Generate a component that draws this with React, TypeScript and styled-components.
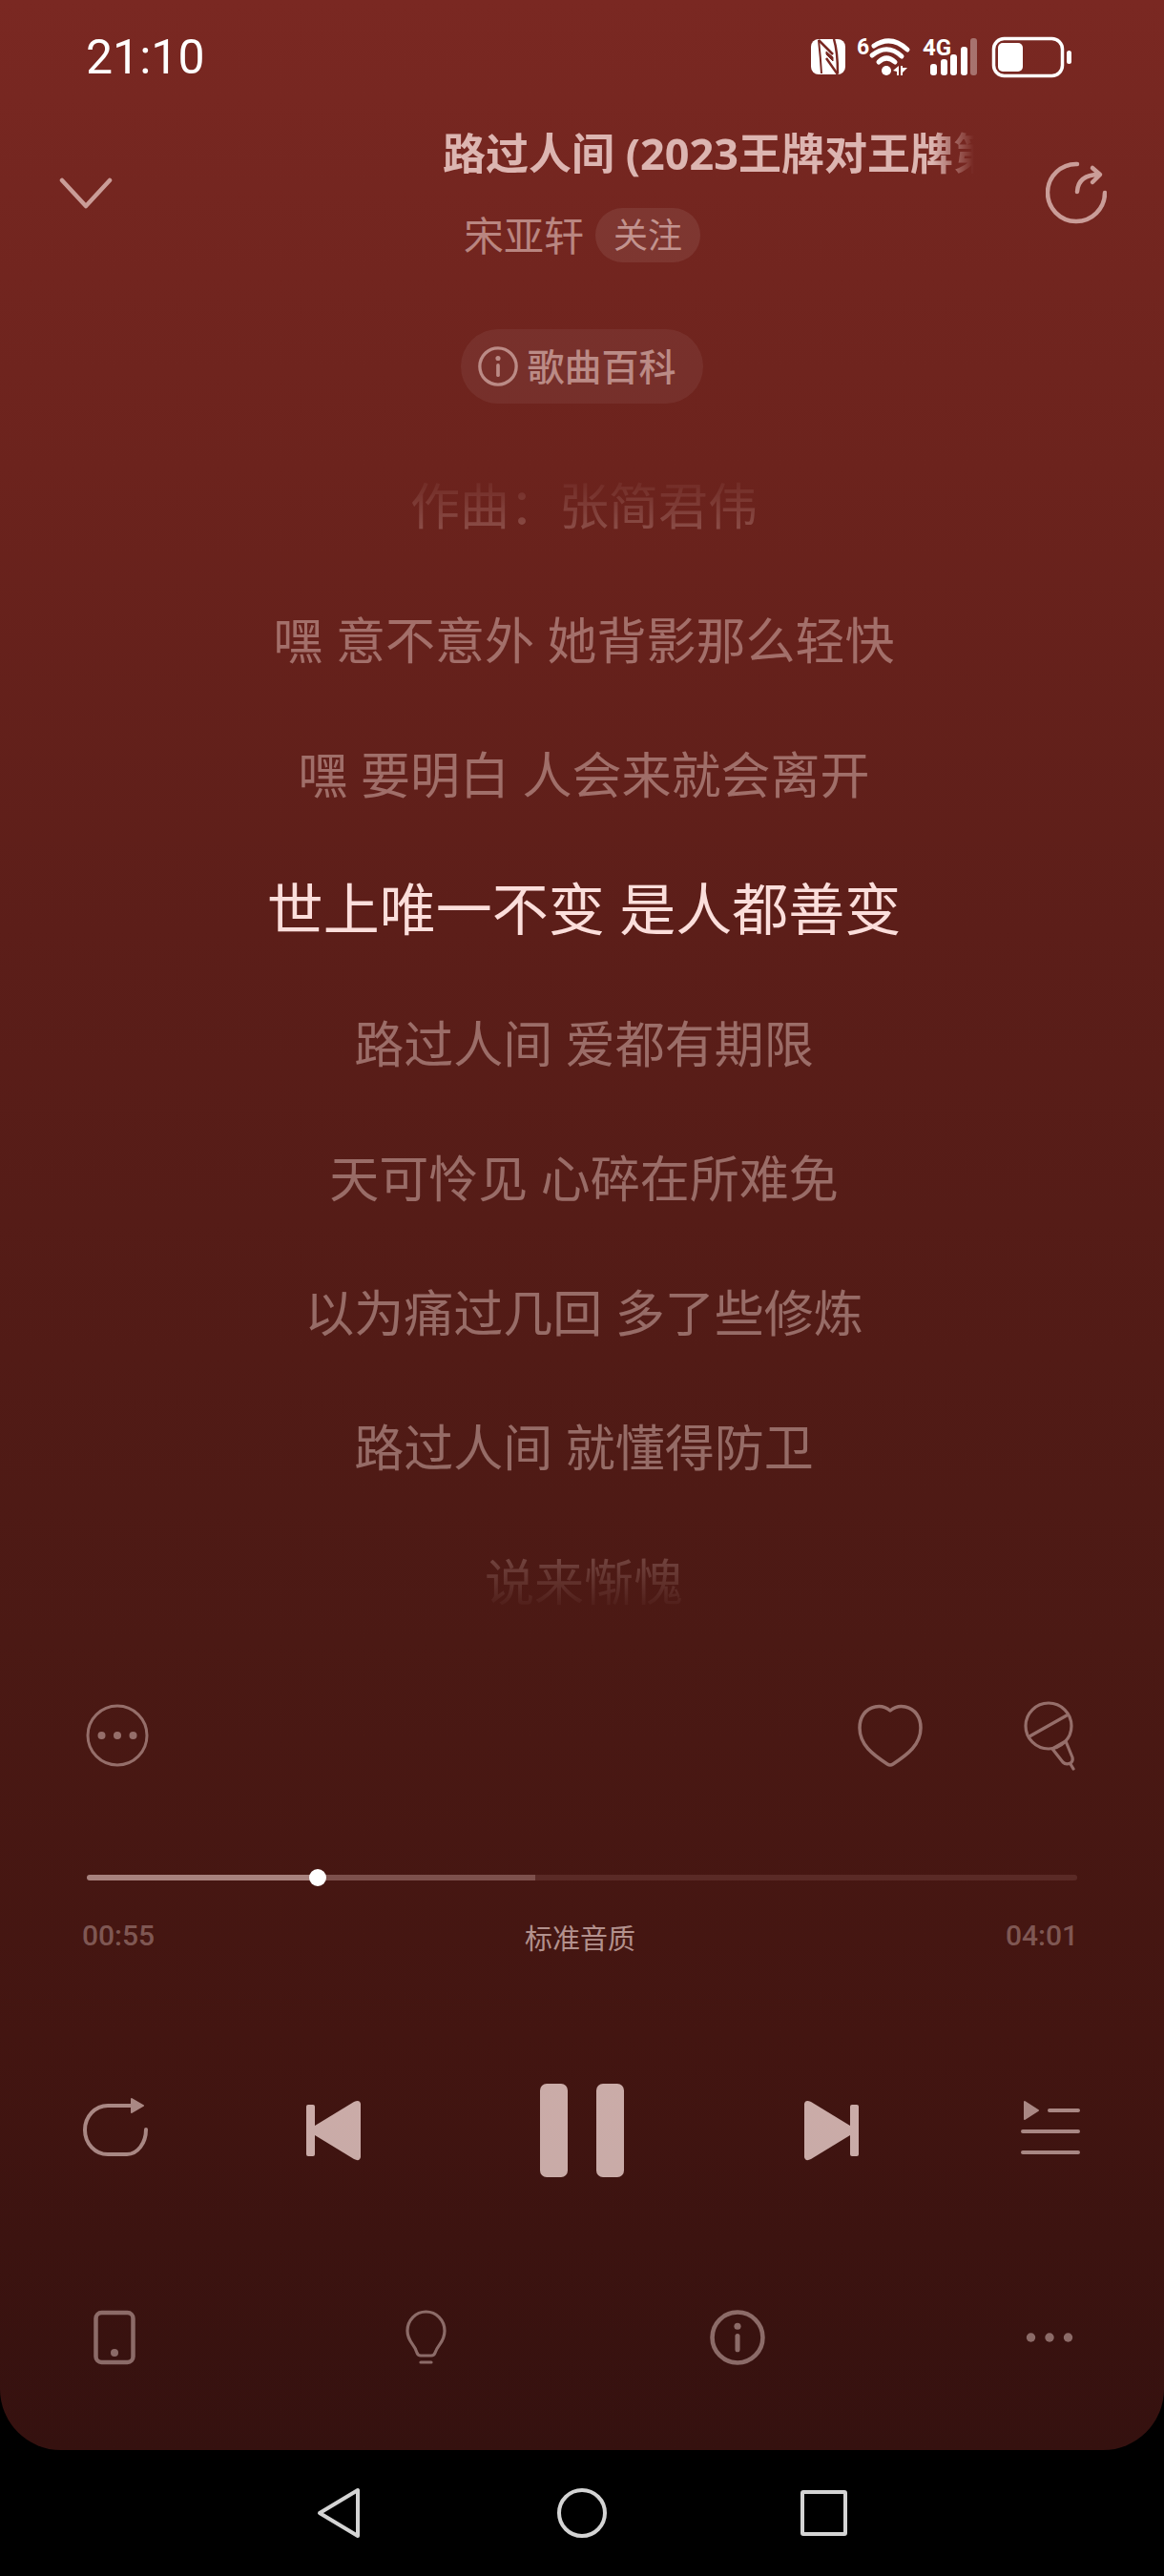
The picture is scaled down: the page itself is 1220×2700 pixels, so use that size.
import React, { useState } from 'react';
import styled, { createGlobalStyle, css } from 'styled-components';

const GlobalStyle = createGlobalStyle`
  * { box-sizing: border-box; }
  html, body { margin: 0; background: #000; }
  body { font-family: "Noto Sans", "Noto Sans CJK SC", sans-serif; color: #fff; }
  button { font: inherit; color: inherit; background: none; border: 0; padding: 0; cursor: pointer; }
  svg { display: block; flex: none; }
`;

const Phone = styled.div`
  display: flex;
  flex-direction: column;
  min-height: 100vh;
`;

const Player = styled.main`
  flex: 1;
  display: flex;
  flex-direction: column;
  border-radius: 0 0 64px 64px;
  color: #ffe6e2;
  background: linear-gradient(180deg, #7a2822 0%, #6c231d 19%, #5c1e19 38%, #4b1914 67%, #431511 83%, #35110f 100%);
`;

const StatusBar = styled.header`
  display: flex;
  align-items: center;
  justify-content: space-between;
  height: 120px;
  padding: 0 96px 0 90px;
  color: #fff;
`;

const Clock = styled.time`
  font-family: Roboto, sans-serif;
  font-size: 50px;
  font-weight: 400;
  line-height: 60px;
`;

const StatusIcons = styled.div`
  display: flex;
  align-items: center;
`;

const TitleBar = styled.section`
  display: grid;
  grid-template-columns: 64px 1fr 64px;
  column-gap: 75px;
  padding: 8px 60px 0;
`;

const IconButton = styled.button<{ $w: number; $h: number; $opacity?: number }>`
  display: flex;
  align-items: center;
  justify-content: center;
  width: ${(p) => p.$w}px;
  height: ${(p) => p.$h}px;
  opacity: ${(p) => p.$opacity ?? 1};
`;

const TitleStack = styled.div`
  display: flex;
  flex-direction: column;
  align-items: center;
  min-width: 0;
`;

const Title = styled.h1`
  align-self: stretch;
  margin: 0;
  padding-left: 265px;
  overflow: hidden;
  white-space: nowrap;
  font-size: 45px;
  font-weight: 700;
  line-height: 66px;
  color: rgba(255, 230, 226, 0.75);
  mask-image: linear-gradient(90deg, #000 calc(100% - 44px), transparent 100%);
`;

const ArtistRow = styled.div`
  display: flex;
  align-items: center;
  gap: 12px;
  margin-top: 24px;
`;

const Artist = styled.span`
  font-size: 42px;
  line-height: 57px;
  color: rgba(255, 230, 226, 0.5);
`;

const FollowButton = styled.button`
  && {
    height: 57px;
    padding: 0 19px;
    border-radius: 29px;
    font-size: 36px;
    line-height: 57px;
    background: rgba(255, 255, 255, 0.08);
    color: rgba(255, 230, 226, 0.55);
  }
`;

const WikiButton = styled.button`
  && {
    display: flex;
    align-items: center;
    align-self: center;
    gap: 9px;
    height: 78px;
    margin-top: 67px;
    padding: 0 28px 0 18px;
    border-radius: 39px;
    font-size: 39px;
    font-weight: 500;
    line-height: 78px;
    background: rgba(255, 255, 255, 0.06);
    color: rgba(255, 230, 226, 0.5);
  }
`;

const Lyrics = styled.ol`
  list-style: none;
  margin: 36px 0 0;
  padding: 0 0 0 4px;
  text-align: center;
  mask-image: linear-gradient(180deg, transparent 32px, #000 150px, #000 1120px, transparent 1232px);
`;

const LyricLine = styled.li<{ $active?: boolean }>`
  font-size: 52px;
  line-height: 141px;
  color: rgba(255, 230, 226, 0.4);
  ${(p) =>
    p.$active &&
    css`
      font-size: 59px;
      color: #fbdedb;
    `}
`;

const Actions = styled.div`
  display: flex;
  align-items: center;
  gap: 106px;
  margin-top: 54px;
  padding: 0 91px 0 89px;
  opacity: 0.42;
`;

const Spacer = styled.span`
  flex: 1;
`;

const Seek = styled.input<{ $played: number; $buffered: number }>`
  appearance: none;
  display: block;
  width: auto;
  height: 18px;
  margin: 103px 91px 0;
  background: transparent;
  &::-webkit-slider-runnable-track {
    height: 6px;
    border-radius: 3px;
    background: linear-gradient(
      90deg,
      #a8827e 0 ${(p) => p.$played}%,
      #7d504c ${(p) => p.$played}% ${(p) => p.$buffered}%,
      #5a2a26 ${(p) => p.$buffered}% 100%
    );
  }
  &::-webkit-slider-thumb {
    appearance: none;
    width: 18px;
    height: 18px;
    margin-top: -6px;
    border-radius: 50%;
    background: #fff;
  }
`;

const TimeRow = styled.div`
  display: grid;
  grid-template-columns: 1fr auto 1fr;
  align-items: start;
  margin-top: 34px;
  padding: 0 90px 0 86px;
`;

const TimeLabel = styled.span<{ $end?: boolean }>`
  font-family: Roboto, sans-serif;
  font-size: 30px;
  font-weight: 500;
  line-height: 36px;
  color: rgba(255, 230, 226, 0.32);
  text-align: ${(p) => (p.$end ? 'right' : 'left')};
`;

const Quality = styled.button`
  && {
    font-size: 29px;
    line-height: 42px;
    color: rgba(255, 230, 226, 0.6);
  }
`;

const Transport = styled.div`
  display: flex;
  align-items: center;
  justify-content: space-between;
  margin-top: 130px;
  padding: 0 87px;
`;

const Tools = styled.nav`
  display: flex;
  justify-content: space-between;
  margin: 134px 0 85px;
  padding: 0 87px;
  opacity: 0.42;
`;

const SystemNav = styled.nav`
  display: flex;
  align-items: center;
  justify-content: center;
  gap: 194px;
  height: 132px;
  color: #d4d4d4;
`;

const stroke = { fill: 'none', stroke: 'currentColor', strokeLinecap: 'round', strokeLinejoin: 'round' } as const;

const StatusGlyphs = () => (
  <svg width="274" height="60" viewBox="0 -10 274 60" fill="#fff">
    <rect x="0" y="1" width="36" height="37" rx="8" />
    <g fill="none" stroke="#792822">
      <path d="M8 2 Q10 20 11 37" strokeWidth="2" />
      <path d="M8 2 L23 17" strokeWidth="2.500" />
      <path d="M16 14 L23 20 V24 L16 17 Z" fill="#792822" strokeWidth="1" />
      <path d="M16 21 L28 38" strokeWidth="2.500" />
      <path d="M24 1 Q28 14 28 37" strokeWidth="2.500" />
    </g>
    <text x="48" y="17" fontFamily="Roboto, sans-serif" fontWeight="700" fontSize="23">6</text>
    <g fill="none" stroke="#fff" strokeWidth="5" strokeLinecap="round">
      <path d="M66 8 Q84 -4 101 12" />
      <path d="M64 18 Q80 5 95 19" />
      <path d="M71 25 Q79 17 88 25" />
    </g>
    <circle cx="79" cy="34" r="5" />
    <path d="M86 34 L92 29 V39 H90 V35 Z M94 29 V39 H96 V36 L101 31 H96 V29 Z" />
    <text x="117" y="18" fontFamily="Roboto, sans-serif" fontWeight="700" fontSize="24">4G</text>
    <rect x="125" y="27" width="7" height="12" rx="3" />
    <rect x="136" y="22" width="7" height="17" rx="3" />
    <rect x="146" y="17" width="7" height="22" rx="3" />
    <rect x="157" y="9" width="7" height="30" rx="3" />
    <rect x="167" y="0" width="7" height="39" rx="3" opacity=".35" />
    <rect x="191.500" y="0.500" width="72" height="39" rx="11" fill="none" stroke="#fff" strokeWidth="3.500" />
    <rect x="196" y="5" width="26" height="30" rx="5" />
    <rect x="268" y="13" width="5" height="14" rx="2.500" />
  </svg>
);

const ChevronIcon = () => (
  <svg width="60" height="34" viewBox="0 0 60 34" {...stroke} strokeWidth="4.500">
    <path d="M3 3 L28 30 L53 3" />
  </svg>
);

const ShareIcon = () => (
  <svg width="64" height="68" viewBox="0 0 64 68" {...stroke} strokeWidth="4.500">
    <path d="M33 3 A30 30 0 1 0 62 33" />
    <path d="M33 32 Q34 14 56 14 M49 7 L57 14 L49 22" />
  </svg>
);

const InfoIcon = ({ size }: { size: number }) => (
  <svg width={size} height={size} viewBox="0 0 57 57" {...stroke} strokeWidth="4.500">
    <circle cx="28.500" cy="28.500" r="26" />
    <path d="M28.500 27 V41" strokeWidth="5" />
    <circle cx="28.500" cy="17" r="3.500" fill="currentColor" stroke="none" />
  </svg>
);

const CommentIcon = () => (
  <svg width="66" height="66" viewBox="0 0 66 66" {...stroke} strokeWidth="3">
    <circle cx="33" cy="33" r="31" />
    <g fill="currentColor" stroke="none">
      <circle cx="16.500" cy="33" r="4" />
      <circle cx="33" cy="33" r="4" />
      <circle cx="49.500" cy="33" r="4" />
    </g>
  </svg>
);

const HeartIcon = () => (
  <svg width="68" height="66" viewBox="0 0 68 66" {...stroke} strokeWidth="3.500">
    <path d="M34 7 C28 2 22 2 18 3 C8 5 2 14 2 25 C2 43 16 53 31 63 Q34 65 37 63 C52 53 66 43 66 25 C66 14 60 5 50 3 C46 2 40 2 34 7 Z" />
  </svg>
);

const MicIcon = () => (
  <svg width="56" height="74" viewBox="0 0 56 74" {...stroke} strokeWidth="3.200">
    <circle cx="26" cy="27" r="24" />
    <path d="M6 38 L45 16" />
    <path d="M30 51 L44 43 L51 60 Q52 64 49 66 Q44 68 41 65 Z" />
    <path d="M49 67 L52 72" />
  </svg>
);

const LoopIcon = () => (
  <svg width="68" height="70" viewBox="0 0 68 70" {...stroke} strokeWidth="4">
    <path d="M50 9 H26 A24 25.500 0 0 0 26 60 H46 A20 26 0 0 0 66 34" />
    <path d="M51 2 L63 9 L51 16 Z" fill="currentColor" strokeWidth="2" />
  </svg>
);

const SkipIcon = ({ back }: { back?: boolean }) => (
  <svg width="57" height="64" viewBox="0 0 57 64" fill="currentColor">
    <g transform={back ? 'matrix(-1 0 0 1 57 0)' : undefined}>
      <path d="M0 4 Q1 -1 7 2 L48 27 V37 L7 62 Q1 65 0 60 Z" />
      <rect x="48" y="5" width="9" height="54" rx="2" />
    </g>
  </svg>
);

const PauseIcon = () => (
  <svg width="90" height="100" viewBox="0 0 90 100" fill="currentColor">
    <rect x="1" y="1" width="29" height="98" rx="7" />
    <rect x="60" y="1" width="29" height="98" rx="7" />
  </svg>
);

const PlayIcon = () => (
  <svg width="90" height="100" viewBox="0 0 90 100" fill="currentColor">
    <path d="M12 2 L86 50 L12 98 Z" />
  </svg>
);

const QueueIcon = () => (
  <svg width="68" height="66" viewBox="-4 0 68 66" {...stroke} strokeWidth="4">
    <path d="M31 12 H61 M3 34 H61 M3 56 H61" />
    <path d="M5 3 L19 12 L5 21 Z" fill="currentColor" strokeWidth="2" />
  </svg>
);

const DeviceIcon = () => (
  <svg width="44" height="58" viewBox="0 0 44 58" {...stroke} strokeWidth="4.500">
    <rect x="2.500" y="3" width="39" height="52" rx="6" />
    <circle cx="22" cy="45" r="4" fill="currentColor" stroke="none" />
  </svg>
);

const BulbIcon = () => (
  <svg width="44" height="58" viewBox="0 0 44 58" {...stroke} strokeWidth="3.200">
    <path d="M16 48 Q13 48 12 45 C10 36 2 34 2 22 A19.500 20 0 0 1 41 22 C41 34 34 36 31 45 Q30 48 27 48 Z" />
    <path d="M16 55 H27" />
  </svg>
);

const MoreIcon = () => (
  <svg width="50" height="12" viewBox="0 0 50 12" fill="currentColor">
    <circle cx="5.500" cy="6" r="4.700" />
    <circle cx="25" cy="6" r="4.700" />
    <circle cx="44.500" cy="6" r="4.700" />
  </svg>
);

const lyrics = [
  '作曲：张简君伟',
  '嘿 意不意外 她背影那么轻快',
  '嘿 要明白 人会来就会离开',
  '世上唯一不变 是人都善变',
  '路过人间 爱都有期限',
  '天可怜见 心碎在所难免',
  '以为痛过几回 多了些修炼',
  '路过人间 就懂得防卫',
  '说来惭愧',
];

export default function App() {
  const [position, setPosition] = useState(55);
  const [playing, setPlaying] = useState(true);
  const duration = 241;
  const clock = (s: number) =>
    `${String(Math.floor(s / 60)).padStart(2, '0')}:${String(s % 60).padStart(2, '0')}`;

  return (
    <Phone>
      <GlobalStyle />
      <Player>
        <StatusBar>
          <Clock>21:10</Clock>
          <StatusIcons>
            <StatusGlyphs />
          </StatusIcons>
        </StatusBar>

        <TitleBar>
          <IconButton $w={64} $h={150} $opacity={0.62} aria-label="收起">
            <ChevronIcon />
          </IconButton>
          <TitleStack>
            <Title>路过人间 (2023王牌对王牌第</Title>
            <ArtistRow>
              <Artist>宋亚轩</Artist>
              <FollowButton>关注</FollowButton>
            </ArtistRow>
          </TitleStack>
          <IconButton $w={64} $h={150} $opacity={0.62} aria-label="分享">
            <ShareIcon />
          </IconButton>
        </TitleBar>

        <WikiButton>
          <InfoIcon size={42} />
          歌曲百科
        </WikiButton>

        <Lyrics>
          {lyrics.map((line, i) => (
            <LyricLine key={line} $active={i === 3}>
              {line}
            </LyricLine>
          ))}
        </Lyrics>

        <Actions>
          <IconButton $w={68} $h={74} aria-label="评论">
            <CommentIcon />
          </IconButton>
          <Spacer />
          <IconButton $w={68} $h={74} aria-label="喜欢">
            <HeartIcon />
          </IconButton>
          <IconButton $w={56} $h={74} aria-label="K歌">
            <MicIcon />
          </IconButton>
        </Actions>

        <Seek
          type="range"
          aria-label="播放进度"
          min={0}
          max={duration}
          value={position}
          $played={(position / duration) * 100}
          $buffered={45.3}
          onChange={(e) => setPosition(Number(e.target.value))}
        />
        <TimeRow>
          <TimeLabel>{clock(position)}</TimeLabel>
          <Quality>标准音质</Quality>
          <TimeLabel $end>{clock(duration)}</TimeLabel>
        </TimeRow>

        <Transport>
          <IconButton $w={68} $h={100} $opacity={0.55} aria-label="循环模式">
            <LoopIcon />
          </IconButton>
          <IconButton $w={57} $h={100} $opacity={0.72} aria-label="上一首">
            <SkipIcon back />
          </IconButton>
          <IconButton
            $w={134}
            $h={100}
            $opacity={0.72}
            aria-label={playing ? '暂停' : '播放'}
            onClick={() => setPlaying(!playing)}
          >
            {playing ? <PauseIcon /> : <PlayIcon />}
          </IconButton>
          <IconButton $w={57} $h={100} $opacity={0.72} aria-label="下一首">
            <SkipIcon />
          </IconButton>
          <IconButton $w={68} $h={100} $opacity={0.55} aria-label="播放列表">
            <QueueIcon />
          </IconButton>
        </Transport>

        <Tools>
          <IconButton $w={66} $h={66} aria-label="设备">
            <DeviceIcon />
          </IconButton>
          <IconButton $w={66} $h={66} aria-label="灵感">
            <BulbIcon />
          </IconButton>
          <IconButton $w={66} $h={66} aria-label="歌曲信息">
            <InfoIcon size={58} />
          </IconButton>
          <IconButton $w={66} $h={66} aria-label="更多">
            <MoreIcon />
          </IconButton>
        </Tools>
      </Player>

      <SystemNav>
        <IconButton $w={60} $h={60} aria-label="返回">
          <svg width="48" height="54" viewBox="0 0 48 54" {...stroke} strokeWidth="4">
            <path d="M43 3 V51 L3 27 Z" />
          </svg>
        </IconButton>
        <IconButton $w={60} $h={60} aria-label="主屏幕">
          <svg width="54" height="54" viewBox="0 0 54 54" {...stroke} strokeWidth="4">
            <circle cx="27" cy="27" r="24" />
          </svg>
        </IconButton>
        <IconButton $w={60} $h={60} aria-label="最近任务">
          <svg width="50" height="50" viewBox="0 0 50 50" {...stroke} strokeWidth="4">
            <rect x="2" y="3" width="45" height="44" rx="1" />
          </svg>
        </IconButton>
      </SystemNav>
    </Phone>
  );
}
